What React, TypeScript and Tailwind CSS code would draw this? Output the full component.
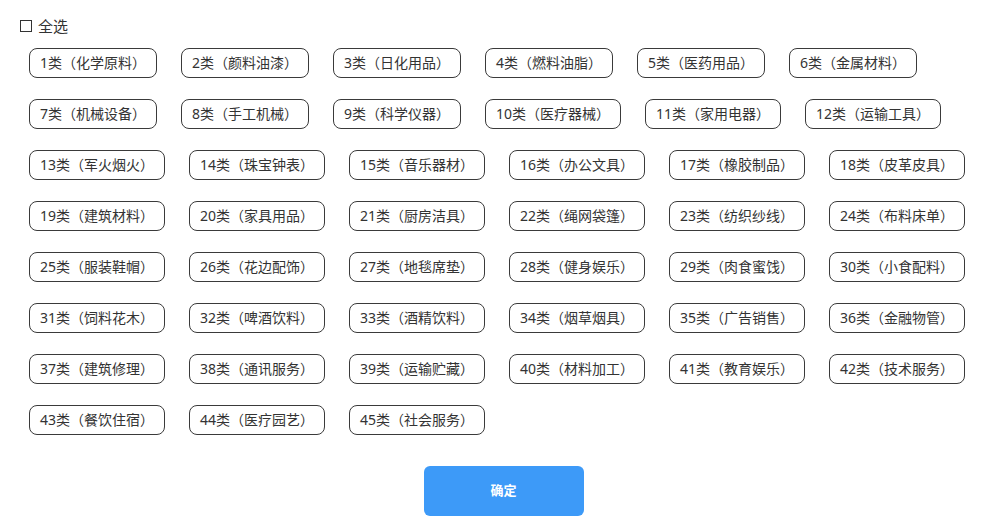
import React from 'react';

const classes = [
  '1类（化学原料）', '2类（颜料油漆）', '3类（日化用品）', '4类（燃料油脂）', '5类（医药用品）', '6类（金属材料）',
  '7类（机械设备）', '8类（手工机械）', '9类（科学仪器）', '10类（医疗器械）', '11类（家用电器）', '12类（运输工具）',
  '13类（军火烟火）', '14类（珠宝钟表）', '15类（音乐器材）', '16类（办公文具）', '17类（橡胶制品）', '18类（皮革皮具）',
  '19类（建筑材料）', '20类（家具用品）', '21类（厨房洁具）', '22类（绳网袋篷）', '23类（纺织纱线）', '24类（布料床单）',
  '25类（服装鞋帽）', '26类（花边配饰）', '27类（地毯席垫）', '28类（健身娱乐）', '29类（肉食蜜饯）', '30类（小食配料）',
  '31类（饲料花木）', '32类（啤酒饮料）', '33类（酒精饮料）', '34类（烟草烟具）', '35类（广告销售）', '36类（金融物管）',
  '37类（建筑修理）', '38类（通讯服务）', '39类（运输贮藏）', '40类（材料加工）', '41类（教育娱乐）', '42类（技术服务）',
  '43类（餐饮住宿）', '44类（医疗园艺）', '45类（社会服务）',
];

export default function App() {
  return (
    <div
      className="w-[999px] h-[524px] bg-white pt-[16px] pl-[20px] pr-[12px] text-[#333333]"
      style={{ fontFamily: '"Noto Sans", "Noto Sans CJK SC", sans-serif' }}
    >
      <label className="flex items-center h-[20px] gap-[6px] text-[15px] leading-[20px] cursor-pointer">
        <span className="w-[12px] h-[12px] border border-[#333333] bg-white" />
        全选
      </label>

      <div className="mt-[12px] pl-[9px] flex flex-wrap gap-x-[24px] gap-y-[21px]">
        {classes.map((c) => (
          <div
            key={c}
            className="h-[30px] px-[10px] border border-[#3a3a3a] rounded-[8px] text-[14px] leading-[28px] whitespace-nowrap"
          >
            {c}
          </div>
        ))}
      </div>

      <div className="flex justify-center mt-[31px]">
        <button className="w-[160px] h-[50px] rounded-[6px] bg-[#3d9af8] text-white text-[13px] font-bold">
          确定
        </button>
      </div>
    </div>
  );
}
